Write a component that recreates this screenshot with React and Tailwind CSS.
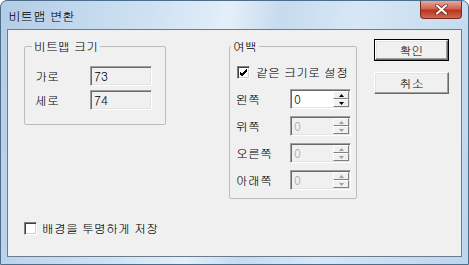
import React from 'react';

const Checkbox = ({ checked }) => (
  <div className="w-[13px] h-[13px] bg-white border border-t-[#808080] border-l-[#808080] border-b-white border-r-white shadow-[inset_1px_1px_0_#404040,inset_-1px_-1px_0_#d4d0c8] flex items-center justify-center">
    {checked && (
      <svg width="9" height="9" viewBox="0 0 9 9">
        <path d="M1 4 L3 6 L8 1 M1 5 L3 7 L8 2 M1 6 L3 8 L8 3" stroke="#000" strokeWidth="1" fill="none" />
      </svg>
    )}
  </div>
);

const Spin = ({ disabled }) => {
  const c = disabled ? '#a0a0a0' : '#000';
  return (
    <div className="flex flex-col w-[16px] h-[16px] mr-[1px]">
      <div className="flex-1 flex items-center justify-center bg-[#f0f0f0] border border-t-white border-l-white border-b-[#808080] border-r-[#808080]">
        <svg width="5" height="3" viewBox="0 0 5 3"><path d="M2.5 0 L5 3 L0 3 Z" fill={c} /></svg>
      </div>
      <div className="flex-1 flex items-center justify-center bg-[#f0f0f0] border border-t-white border-l-white border-b-[#808080] border-r-[#808080]">
        <svg width="5" height="3" viewBox="0 0 5 3"><path d="M0 0 L5 0 L2.5 3 Z" fill={c} /></svg>
      </div>
    </div>
  );
};

const Edit = ({ value, white, disabled, spin, w = 'w-[62px]' }) => (
  <div
    className={`${w} h-[20px] flex items-center justify-between border border-t-[#a0a0a0] border-l-[#a0a0a0] border-b-white border-r-white shadow-[inset_1px_1px_0_#696969,inset_-1px_-1px_0_#e3e3e3] ${white ? 'bg-white' : 'bg-[#f0f0f0]'}`}
  >
    <span className={`pl-[3px] leading-[14px] ${disabled ? 'text-[#a0a0a0]' : 'text-black'}`}>{value}</span>
    {spin && <Spin disabled={disabled} />}
  </div>
);

const Button = ({ children, isDefault }) => (
  <div className={`w-[75px] h-[22px] ${isDefault ? 'border border-black' : ''}`}>
    <div className="w-full h-full flex items-center justify-center bg-[#f0f0f0] border border-t-white border-l-white border-b-[#696969] border-r-[#696969] shadow-[inset_-1px_-1px_0_#a0a0a0,inset_1px_1px_0_#e3e3e3] leading-[14px]">
      {children}
    </div>
  </div>
);

const Row = ({ label, children, lw }) => (
  <div className="flex items-center">
    <span className={`${lw} leading-[14px]`}>{label}</span>
    {children}
  </div>
);

export default function App() {
  return (
    <div className="w-[469px] h-[265px] flex flex-col border border-[#4d6d8c] rounded-t-[7px] overflow-hidden bg-[linear-gradient(100deg,#b3cde6_0%,#cfe2f3_30%,#e4eff9_45%,#c6dbef_55%,#d7e7f5_70%,#bdd6ec_100%)] text-[12px] text-black font-['Gulim','Noto_Sans_CJK_KR',sans-serif]">
      <div className="h-[28px] flex items-start justify-between">
        <span className="pl-[7px] pt-[8px] leading-[14px] text-[12.5px]">비트맵 변환</span>
        <div className="mr-[6px] w-[42px] h-[18px] rounded-b-[4px] border border-t-0 border-[#7a2a22] bg-[linear-gradient(#e9a99c,#d0634f_45%,#b8341f_55%,#cf6a4e)] flex items-center justify-center">
          <svg width="13" height="11" viewBox="0 0 13 11">
            <path d="M2 1.5 L11 9.5 M11 1.5 L2 9.5" stroke="#5a1a10" strokeWidth="3.4" strokeLinecap="round" />
            <path d="M2 1.5 L11 9.5 M11 1.5 L2 9.5" stroke="#fff" strokeWidth="2.2" strokeLinecap="round" />
          </svg>
        </div>
      </div>
      <div className="flex-1 mx-[6px] mb-[7px] border border-[#6b7c8e] bg-[#f0f0f0] flex pl-[16px] pt-[9px]">
        <div className="flex flex-col">
          <fieldset className="w-[142px] h-[86px] border border-[#bcbcbc] rounded-[2px] flex flex-col">
            <legend className="ml-[7px] px-[2px] leading-[14px]">비트맵 크기</legend>
            <div className="flex flex-col gap-[4px] mt-[13px] pl-[10px]">
              <Row label="가로" lw="w-[55px]"><Edit value="73" /></Row>
              <Row label="세로" lw="w-[55px]"><Edit value="74" /></Row>
            </div>
          </fieldset>
          <div className="mt-[96px] flex items-center gap-[5px]">
            <Checkbox />
            <span className="leading-[14px]">배경을 투명하게 저장</span>
          </div>
        </div>
        <fieldset className="ml-[63px] w-[128px] h-[160px] border border-[#bcbcbc] rounded-[2px] flex flex-col">
          <legend className="ml-[1px] px-[2px] leading-[14px]">여백</legend>
          <div className="mt-[12px] flex items-center gap-[6px] pl-[7px]">
            <Checkbox checked />
            <span className="leading-[14px]">같은 크기로 설정</span>
          </div>
          <div className="flex flex-col gap-[7px] mt-[10px] pl-[6px]">
            <Row label="왼쪽" lw="w-[54px]"><Edit value="0" white spin w="w-[61px]" /></Row>
            <Row label="위쪽" lw="w-[54px]"><Edit value="0" disabled spin w="w-[61px]" /></Row>
            <Row label="오른쪽" lw="w-[54px]"><Edit value="0" disabled spin w="w-[61px]" /></Row>
            <Row label="아래쪽" lw="w-[54px]"><Edit value="0" disabled spin w="w-[61px]" /></Row>
          </div>
        </fieldset>
        <div className="ml-[17px] flex flex-col gap-[11px]">
          <Button isDefault>확인</Button>
          <Button>취소</Button>
        </div>
      </div>
    </div>
  );
}
